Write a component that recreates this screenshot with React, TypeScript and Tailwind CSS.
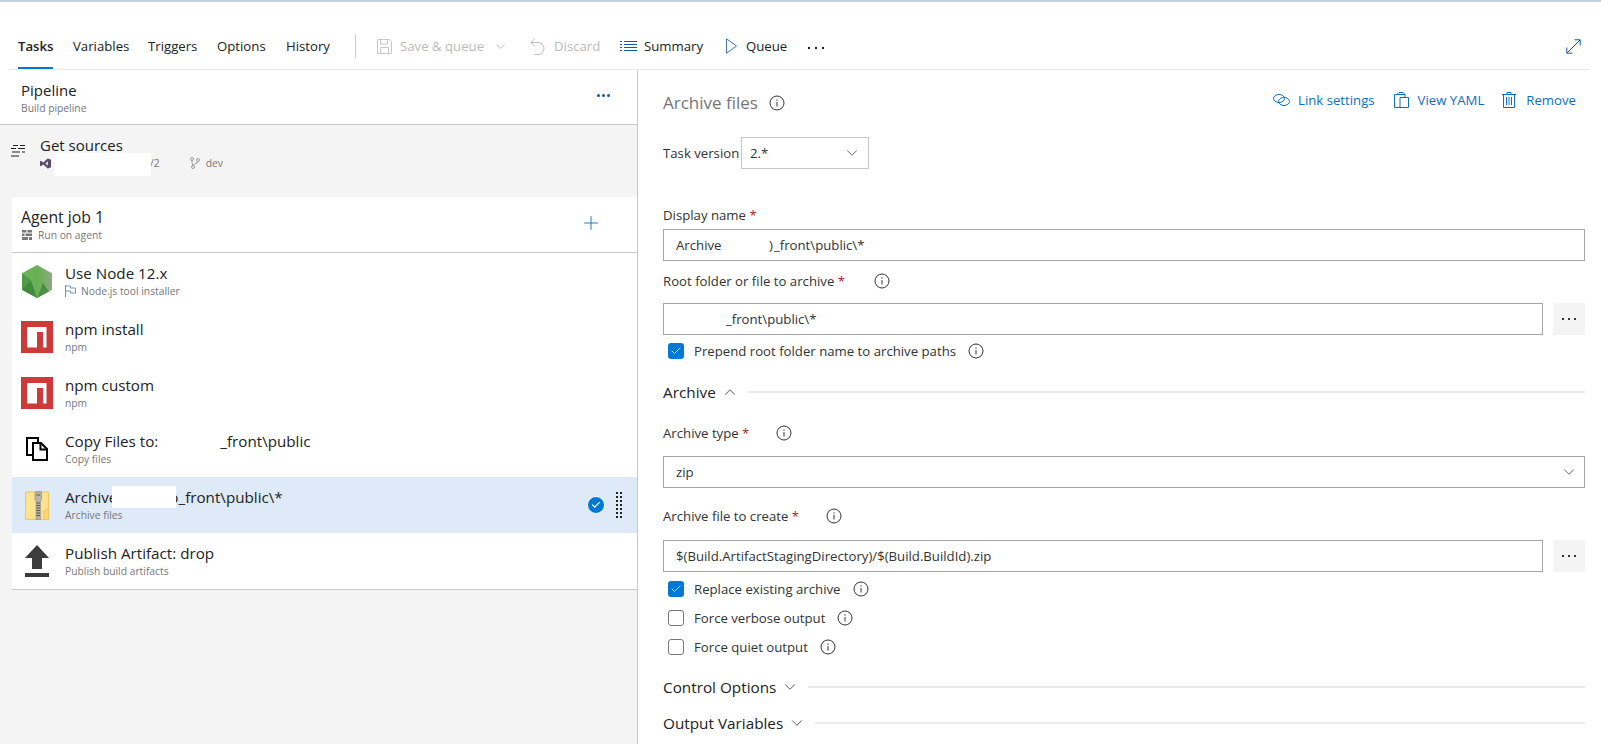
import { ChevronDown, ChevronUp, Check, Plus } from "lucide-react";

const Info = ({ className = "" }: { className?: string }) => (
  <svg viewBox="0 0 16 16" className={`w-[16px] h-[16px] shrink-0 ${className}`} fill="none" stroke="#333" strokeWidth="1">
    <circle cx="8" cy="8" r="7" />
    <path d="M8 7v4.500M8 4.300v1.400" />
  </svg>
);

const Req = () => <span className="text-[#a4262c]"> *</span>;

const NpmIcon = () => (
  <svg viewBox="0 0 32 32" className="w-[32px] h-[32px]">
    <rect width="32" height="32" fill="#cd3a3a" />
    <path d="M6 6h19.500v20.500H22V11h-6v15.500H6z" fill="#fff" />
  </svg>
);

const NodeIcon = () => (
  <svg viewBox="0 0 30 33" className="w-[30px] h-[33px]">
    <defs>
      <linearGradient id="nodeSide" x1="0" x2="1" y1="0" y2="0">
        <stop offset="0" stopColor="#6ab556" />
        <stop offset="0.550" stopColor="#69b054" />
        <stop offset="1" stopColor="#8fa98a" />
      </linearGradient>
    </defs>
    <path d="M15 0l15 8.200v16.600L15 33 0 24.800V8.200z" fill="url(#nodeSide)" />
    <path d="M0 8.200l9 7L0 24.800z" fill="#4f9c48" />
    <path d="M0 24.800l9-9.600 6 17.800z" fill="#3f8c3d" />
    <path d="M15 33l6-15 6 8.500z" fill="#4a9146" />
  </svg>
);

const CopyIcon = () => (
  <svg viewBox="0 0 22 24" className="w-[22px] h-[24px]" fill="#fff" stroke="#000" strokeWidth="2">
    <path d="M1 1h11v17H1z" />
    <path d="M7 6h8l6 6v11H7z" />
    <path d="M14.500 6v6.500H21" fill="none" />
  </svg>
);

const ZipIcon = () => (
  <svg viewBox="0 0 24 29" className="w-[24px] h-[29px]">
    <path d="M0.500 1h23v27.500H0.500z" fill="#fde28f" stroke="#efc860" />
    <path d="M19 28.500v-8l2.200-3 2.300 3v8z" fill="#fbd872" stroke="#efc860" />
    <path d="M11 0.500h4.500a1 1 0 0 1 1 1v7l-1 2v18h-4.500v-18l-1-2v-7a1 1 0 0 1 1-1z" fill="#b5b3aa" stroke="#8f8d84" strokeWidth="0.600" />
    <path d="M11.500 4h3.500M11.500 12h3.500M11.500 14.500h3.500M11.500 17h3.500M11.500 19.500h3.500M11.500 22h3.500M11.500 24.500h3.500" stroke="#55534c" strokeWidth="1" />
  </svg>
);

const UploadIcon = () => (
  <svg viewBox="0 0 24 32" className="w-[24px] h-[32px]" fill="#3c3c3c">
    <path d="M12 0l12 13h-7v11H7V13H0z" />
    <path d="M0 28h24v4H0z" />
  </svg>
);

const tasks = [
  { title: "Use Node 12.x", sub: "Node.js tool installer", flag: true, icon: <NodeIcon /> },
  { title: "npm install", sub: "npm", icon: <NpmIcon /> },
  { title: "npm custom", sub: "npm", icon: <NpmIcon /> },
  { title: "Copy Files to:", suffix: "_front\\public", sub: "Copy files", icon: <CopyIcon /> },
  { title: "Archive", suffix: "o_front\\public\\*", sub: "Archive files", icon: <ZipIcon />, selected: true },
  { title: "Publish Artifact: drop", sub: "Publish build artifacts", icon: <UploadIcon /> },
];

const CheckRow = ({ label, checked }: { label: string; checked?: boolean }) => (
  <div className="flex items-center h-[29px] pl-[5px]">
    {checked ? (
      <span className="w-[16px] h-[16px] rounded-[3px] bg-[#0078d4] flex items-center justify-center">
        <Check className="w-[12px] h-[12px] text-white" strokeWidth={1.5} />
      </span>
    ) : (
      <span className="w-[16px] h-[16px] rounded-[3px] border border-[#777]" />
    )}
    <span className="ml-[10px] text-[#333]">{label}</span>
    <Info className="ml-[12px]" />
  </div>
);

const Section = ({ label, open, className = "" }: { label: string; open?: boolean; className?: string }) => (
  <div className={`flex items-center h-[24px] text-[15.300px] text-[#222] ${className}`}>
    <span>{label}</span>
    {open ? (
      <ChevronUp className="w-[18px] h-[18px] ml-[5px] text-[#333]" strokeWidth={1.100} />
    ) : (
      <ChevronDown className="w-[18px] h-[18px] ml-[5px] text-[#333]" strokeWidth={1.100} />
    )}
    <div className="flex-1 h-[2px] bg-[#ebebeb] ml-[9px]" />
  </div>
);

const Ellipsis = () => (
  <div className="w-[32px] h-[32px] bg-[#f4f4f4] flex items-center justify-center gap-[4px] ml-[10px] shrink-0">
    <span className="w-[2px] h-[2px] bg-[#333]" />
    <span className="w-[2px] h-[2px] bg-[#333]" />
    <span className="w-[2px] h-[2px] bg-[#333]" />
  </div>
);

const inputCls = "h-[32px] border border-[#a6a6a6] flex items-center text-[#333]";

export default function App() {
  return (
    <div className="w-[1601px] h-[744px] overflow-hidden bg-white font-['Open_Sans',sans-serif] text-[13.200px] leading-[18px] text-[#222]">
      <div className="h-[2px] bg-[#c3d0e3]" />

      {/* Toolbar */}
      <div className="h-[68px] ml-[9px] mr-[11px] pt-[32px] border-b border-[#e8e8e8] flex items-start">
        <div className="w-[55px] ml-[9px] h-[35px] shrink-0">
          <div className="w-[35px] h-[35px] border-b-[2px] border-[#0078d4] pt-[3px] text-center font-semibold">Tasks</div>
        </div>
        <div className="w-[75px] pt-[3px] shrink-0">Variables</div>
        <div className="w-[69px] pt-[3px] shrink-0">Triggers</div>
        <div className="w-[69px] pt-[3px] shrink-0">Options</div>
        <div className="w-[69px] pt-[3px] shrink-0">History</div>

        <div className="w-px h-[24px] bg-[#ccc] shrink-0" />
        <div className="flex items-center h-[24px] ml-[21px]">
          <svg viewBox="0 0 15 15" className="w-[15px] h-[15px]" fill="none" stroke="#c8c8c8">
            <path d="M0.500 0.500h12l2 2v12h-14z" />
            <path d="M3.500 0.500v4.500h7v-4.500M3.500 14.500v-6h8v6" />
          </svg>
          <span className="w-[86px] ml-[8px] text-[#bbb] whitespace-nowrap">Save &amp; queue</span>
          <ChevronDown className="w-[15px] h-[15px] ml-[7px] text-[#aaa]" strokeWidth={1.200} />
          <svg viewBox="0 0 15 17" className="w-[15px] h-[17px] ml-[22px]" fill="none" stroke="#bbb">
            <path d="M5 0.500l-4 4 4 4M1 4.500h7a6 6 0 0 1 0 12H5" />
          </svg>
          <span className="w-[46px] ml-[9px] text-[#bbb]">Discard</span>
          <svg viewBox="0 0 17 12" className="w-[17px] h-[12px] ml-[20px]" stroke="#0b5cab" strokeWidth="1">
            <path d="M4 1.500h13M4 4.500h13M4 7.500h13M4 10.500h13M0 1.500h2M0 4.500h2M0 7.500h2M0 10.500h2" />
          </svg>
          <span className="w-[58px] ml-[7px]">Summary</span>
          <svg viewBox="0 0 11 16" className="w-[11px] h-[16px] ml-[24px]" fill="none" stroke="#3f78b5">
            <path d="M0.500 0.800l10 7.200-10 7.200z" />
          </svg>
          <span className="w-[41px] ml-[9px]">Queue</span>
          <div className="flex gap-[5px] ml-[21px] mt-[3px]">
            <span className="w-[2px] h-[2px] bg-[#222]" />
            <span className="w-[2px] h-[2px] bg-[#222]" />
            <span className="w-[2px] h-[2px] bg-[#222]" />
          </div>
        </div>
        <svg viewBox="0 0 15 15" className="ml-auto mr-[9px] mt-[5px] w-[15px] h-[15px]" fill="none" stroke="#0b5cab">
          <path d="M1 14L14 1M8.500 0.800h5.700v5.700M0.800 8.500v5.700h5.700" />
        </svg>
      </div>

      <div className="flex h-[674px]">
        {/* Left panel */}
        <div className="w-[638px] shrink-0 bg-[#f4f4f4] border-r border-[#c8c8c8]">
          <div className="h-[55px] bg-white border-b border-[#c8c8c8] pl-[21px] pr-[27px] pt-[10px] flex justify-between">
            <div>
              <div className="text-[15px] leading-[20px]">Pipeline</div>
              <div className="text-[10.300px] leading-[14px] text-[#777] mt-[1px]">Build pipeline</div>
            </div>
            <div className="flex gap-[2px] mt-[14px]">
              <span className="w-[3px] h-[3px] rounded-full bg-[#0b5cab]" />
              <span className="w-[3px] h-[3px] rounded-full bg-[#0b5cab]" />
              <span className="w-[3px] h-[3px] rounded-full bg-[#0b5cab]" />
            </div>
          </div>

          <div className="h-[72px] relative flex pl-[11px] pt-[10px]">
            <svg viewBox="0 0 14 12" className="w-[14px] h-[12px] mt-[10px]" stroke="#222" strokeWidth="1">
              <path d="M2 0.500h5M9 0.500h5M0 3.500h5M7 3.500h7M1 7h8M11 7h3M0 11h8" />
            </svg>
            <div className="ml-[15px]">
              <div className="text-[15px] leading-[20px]">Get sources</div>
              <div className="flex items-center text-[10.300px] leading-[14px] text-[#777] mt-[1px]">
                <svg viewBox="0 0 12 12" className="w-[11px] h-[11px]" fill="#5a4a66">
                  <path d="M8.500 0.500L12 2v8l-3.500 1.500L3.500 7 1 9 0 8.500v-5L1 3l2.500 2zM8.500 3.500L6 6l2.500 2.500z" />
                </svg>
                <span className="ml-[99px]">/2</span>
                <svg viewBox="0 0 10 12" className="w-[10px] h-[12px] ml-[30px]" fill="none" stroke="#888" strokeWidth="0.800">
                  <circle cx="2" cy="2" r="1.500" />
                  <circle cx="8" cy="3" r="1.500" />
                  <circle cx="3" cy="10" r="1.500" />
                  <path d="M2 3.500V6l1 2.500M8 4.500C8 7 4 6 3 8.500" />
                </svg>
                <span className="ml-[6px]">dev</span>
              </div>
            </div>
            {/* redacted repo name */}
            <div className="absolute left-[54px] top-[28px] w-[97px] h-[23px] bg-white" />
          </div>

          <div className="ml-[12px] bg-white">
            <div className="h-[56px] border-b border-[#c8c8c8] pl-[9px] pr-[35px] pt-[10px] flex justify-between">
              <div>
                <div className="text-[15.800px] leading-[20px]">Agent job 1</div>
                <div className="flex items-center text-[10.300px] leading-[14px] text-[#777] mt-[1px]">
                  <svg viewBox="0 0 10 10" className="w-[10px] h-[10px] ml-[1px]" fill="#777">
                    <path d="M0 0h4.500v2.500H0zM5.500 0H10v2.500H5.500zM0 3.500h2.500V6H0zM3.500 3.500H10V6H3.500zM0 7h6v3H0zM7 7h3v3H7z" />
                  </svg>
                  <span className="ml-[6px]">Run on agent</span>
                </div>
              </div>
              <Plus className="w-[22px] h-[22px] mt-[5px] text-[#0b6fc7]" strokeWidth={1} />
            </div>

            {tasks.map((t) => (
              <div key={t.sub + t.title} className={`h-[56px] relative flex pr-[14px] ${t.selected ? "bg-[#deeaf7]" : ""}`}>
                <div className="w-[50px] mr-[3px] flex items-center justify-center shrink-0">{t.icon}</div>
                <div className="pt-[9px]">
                  <div className="text-[15.200px] leading-[22px] whitespace-pre">
                    {t.title}
                    {t.suffix && <span className={t.selected ? "ml-[52px]" : "ml-[62px]"}>{t.suffix}</span>}
                  </div>
                  <div className="flex items-center text-[10.300px] leading-[14px] text-[#777]">
                    {t.flag && (
                      <svg viewBox="0 0 11 12" className="w-[11px] h-[12px] mr-[5px]" fill="none" stroke="#5b8db8" strokeWidth="0.900">
                        <path d="M0.500 0v12M0.500 1h5v2h5v5h-5v-2h-5" />
                      </svg>
                    )}
                    {t.sub}
                  </div>
                </div>
                {t.selected && (
                  <>
                    {/* redacted path */}
                    <div className="absolute left-[100px] top-[9px] w-[64px] h-[22px] bg-white" />
                    <div className="ml-auto flex items-center">
                      <span className="w-[18px] h-[18px] rounded-full bg-[#0078d4] border border-white flex items-center justify-center">
                        <Check className="w-[10px] h-[10px] text-white" strokeWidth={3} />
                      </span>
                      <div className="ml-[10px] w-[8px] h-[28px] bg-[radial-gradient(#222_1px,transparent_1.200px)] bg-[length:4px_4px]" />
                    </div>
                  </>
                )}
              </div>
            ))}
            <div className="h-px bg-[#c8c8c8]" />
          </div>
        </div>

        {/* Right panel */}
        <div className="flex-1 pl-[25px] pr-[16px]">
          <div className="flex items-center h-[32px] mt-[14px]">
            <span className="text-[17px] text-[#767676] mt-[5px]">Archive files</span>
            <Info className="ml-[11px] mt-[5px]" />
            <div className="ml-auto mr-[9px] flex items-center text-[#106ebe]">
              <svg viewBox="0 0 17 12" className="w-[17px] h-[12px]" fill="none" stroke="#106ebe" strokeWidth="1">
                <ellipse cx="6" cy="4.500" rx="5.500" ry="4" />
                <ellipse cx="11" cy="7.500" rx="5.500" ry="4" />
              </svg>
              <span className="ml-[8px]">Link settings</span>
              <svg viewBox="0 0 15 16" className="w-[15px] h-[16px] ml-[19px]" fill="none" stroke="#106ebe" strokeWidth="1">
                <path d="M3 2.500H0.500v13H6M3 2.500h8v3M3 2.500l2-2h4l2 2" />
                <path d="M6 5.500h8.500v10H6z" />
              </svg>
              <span className="ml-[9px]">View YAML</span>
              <svg viewBox="0 0 14 16" className="w-[14px] h-[16px] ml-[18px]" fill="none" stroke="#106ebe" strokeWidth="1">
                <path d="M0 2.500h14M5 2.500v-2h4v2M1.500 2.500v13h11v-13" />
                <path d="M4.500 5v8M7 5v8M9.500 5v8" />
              </svg>
              <span className="ml-[10px]">Remove</span>
            </div>
          </div>

          <div className="flex items-center mt-[21px] text-[#333]">
            <span className="w-[78px] -mt-[1px]">Task version</span>
            <div className="w-[128px] h-[32px] border border-[#c8c8c8] flex items-center justify-between pl-[8px] pr-[7px]">
              <span>2.*</span>
              <ChevronDown className="w-[18px] h-[18px]" strokeWidth={1} />
            </div>
          </div>

          <div className="mt-[36px] text-[#333] h-[20px] flex items-center">
            <span>Display name<Req /></span>
          </div>
          <div className={`${inputCls} mt-[4px] pl-[12px]`}>
            <span className="w-[93px]">Archive</span>
            <span className="w-[5px] overflow-hidden">)</span>
            <span>_front\public\*</span>
          </div>

          <div className="flex items-center h-[20px] mt-[10px] text-[#333]">
            <span>Root folder or file to archive<Req /></span>
            <Info className="ml-[29px]" />
          </div>
          <div className="flex mt-[12px]">
            <div className={`${inputCls} flex-1 pl-[62px]`}>_front\public\*</div>
            <Ellipsis />
          </div>
          <div className="mt-[1px]">
            <CheckRow label="Prepend root folder name to archive paths" checked />
          </div>

          <Section label="Archive" open className="mt-[15px]" />

          <div className="flex items-center h-[20px] mt-[19px] text-[#333]">
            <span>Archive type<Req /></span>
            <Info className="ml-[27px]" />
          </div>
          <div className={`${inputCls} mt-[13px] pl-[12px] pr-[6px] justify-between`}>
            <span>zip</span>
            <ChevronDown className="w-[18px] h-[18px]" strokeWidth={1} />
          </div>

          <div className="flex items-center h-[20px] mt-[18px] text-[#333]">
            <span>Archive file to create<Req /></span>
            <Info className="ml-[27px]" />
          </div>
          <div className="flex mt-[14px]">
            <div className={`${inputCls} flex-1 pl-[12px]`}>$(Build.ArtifactStagingDirectory)/$(Build.BuildId).zip</div>
            <Ellipsis />
          </div>
          <div className="mt-[2px]">
            <CheckRow label="Replace existing archive" checked />
            <CheckRow label="Force verbose output" />
            <CheckRow label="Force quiet output" />
          </div>

          <Section label="Control Options" className="mt-[14px]" />
          <Section label="Output Variables" className="mt-[12px]" />
        </div>
      </div>
    </div>
  );
}
